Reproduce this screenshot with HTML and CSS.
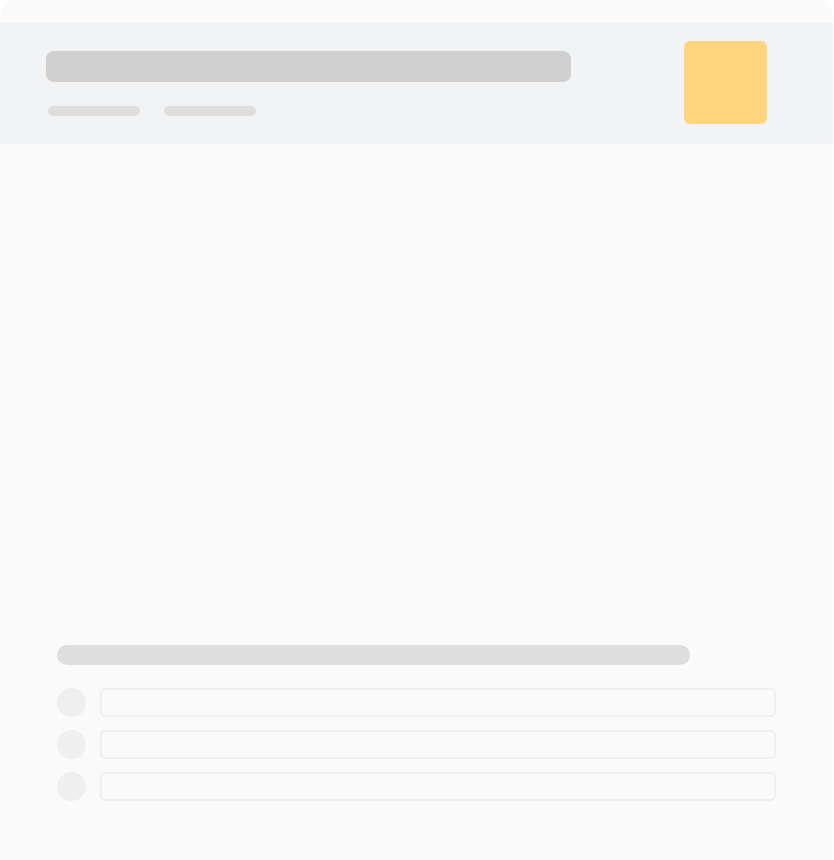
FILE: index.html
```html
<!DOCTYPE html>
<html lang="en">
<head>
<meta charset="utf-8">
<title>Loading</title>
<link rel="stylesheet" href="styles.css">
</head>
<body>
<div class="card">
  <div class="header">
    <div class="header-left">
      <div class="sk-title"></div>
      <div class="sk-meta">
        <div class="sk-chip"></div>
        <div class="sk-chip"></div>
      </div>
    </div>
    <div class="sk-avatar"></div>
  </div>
  <div class="body">
    <div class="sk-heading"></div>
    <div class="rows">
      <div class="row"><div class="sk-dot"></div><div class="sk-field"></div></div>
      <div class="row"><div class="sk-dot"></div><div class="sk-field"></div></div>
      <div class="row"><div class="sk-dot"></div><div class="sk-field"></div></div>
    </div>
  </div>
</div>
</body>
</html>
```
FILE: styles.css
```css
html, body {
  margin: 0;
  padding: 0;
  background: #ffffff;
  font-family: "Liberation Sans", Arial, sans-serif;
}
.card {
  width: 833px;
  min-height: 860px;
  box-sizing: border-box;
  background: #fafafa;
  border-radius: 16px 16px 0 0;
  padding-top: 22px;
  overflow: hidden;
}
.header {
  height: 122px;
  box-sizing: border-box;
  background: #f2f3f5;
  display: flex;
  align-items: center;
  justify-content: space-between;
  padding: 0 66px 2px 46px;
}
.header-left {
  display: flex;
  flex-direction: column;
  gap: 24px;
  padding-top: 2px;
}
.sk-title {
  width: 525px;
  height: 31px;
  background: #d1d0d1;
  border-radius: 8px;
}
.sk-meta {
  display: flex;
  gap: 24px;
  padding-left: 2px;
}
.sk-chip {
  width: 92px;
  height: 10px;
  background: #dedede;
  border-radius: 5px;
}
.sk-avatar {
  width: 83px;
  height: 83px;
  background: #ffd57e;
  border-radius: 6px;
}
.body {
  padding: 501px 57px 0 57px;
}
.sk-heading {
  width: 633px;
  height: 20px;
  background: #dedede;
  border-radius: 10px;
}
.rows {
  margin-top: 23px;
  display: flex;
  flex-direction: column;
  gap: 13px;
}
.row {
  display: flex;
  align-items: center;
  gap: 14px;
}
.sk-dot {
  width: 29px;
  height: 29px;
  border-radius: 50%;
  background: #efefef;
  flex: none;
}
.sk-field {
  flex: 1;
  height: 29px;
  box-sizing: border-box;
  border: 2px solid #efefef;
  border-radius: 5px;
}
```
